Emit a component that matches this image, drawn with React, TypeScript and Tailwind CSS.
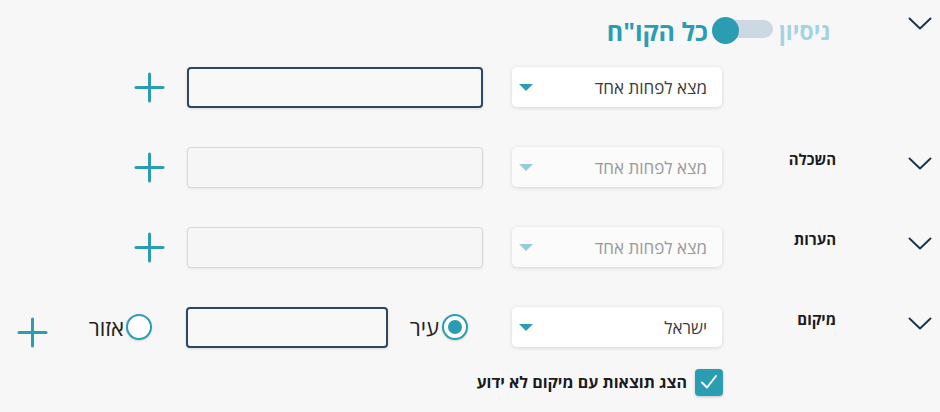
import React from "react";

const TEAL = "#2b9db3";

function Chevron() {
  return (
    <svg width="24" height="13" viewBox="0 0 24 13" className="block">
      <polyline points="1.5,1.5 12,11.5 22.5,1.5" fill="none" stroke="#1d3650" strokeWidth="2" strokeLinecap="round" strokeLinejoin="round" />
    </svg>
  );
}

function Plus({ color = TEAL }: { color?: string }) {
  return (
    <svg width="31" height="31" viewBox="0 0 31 31" className="block">
      <line x1="15.5" y1="2" x2="15.5" y2="29" stroke={color} strokeWidth="3" strokeLinecap="round" />
      <line x1="2" y1="15.5" x2="29" y2="15.5" stroke={color} strokeWidth="3" strokeLinecap="round" />
    </svg>
  );
}

function Select({ text, disabled = false, ml = "ml-[29px]" }: { text: string; disabled?: boolean; ml?: string }) {
  return (
    <div
      className={`${ml} w-[210px] h-[40px] rounded-[5px] flex items-center justify-between pl-[7px] pr-[15px] shadow-[0_1px_4px_rgba(0,0,0,0.14)] ${
        disabled ? "bg-[#fbfbfb]" : "bg-white"
      }`}
    >
      <svg width="14" height="7" viewBox="0 0 14 7" className="block">
        <polygon points="0,0 14,0 7,7" fill={disabled ? "#93cdd9" : TEAL} />
      </svg>
      <span dir="rtl" className={`text-[17px] leading-none ${disabled ? "text-[#9a9a9a]" : "text-[#3c3c3c]"}`}>
        {text}
      </span>
    </div>
  );
}

function TextInput({ width, disabled = false }: { width: string; disabled?: boolean }) {
  return (
    <div
      className={`${width} h-[41px] rounded-[4px] ${
        disabled
          ? "border border-[#d9d9d9] bg-[#f6f6f6] shadow-[0_1px_3px_rgba(0,0,0,0.08)]"
          : "border-2 border-[#2b4862] bg-[#f8f8f8] shadow-[0_1px_3px_rgba(0,0,0,0.12)]"
      }`}
    />
  );
}

function LabelAndChevron({ label }: { label?: string }) {
  return (
    <div className="flex items-start">
      <div className="w-[114px] flex justify-end mt-[2px]">
        {label && (
          <span dir="rtl" className="text-[15px] leading-[20px] font-bold text-[#1b1b1b]">
            {label}
          </span>
        )}
      </div>
      <div className="ml-[72px] mt-[10px]">
        <Chevron />
      </div>
    </div>
  );
}

function Radio({ checked }: { checked: boolean }) {
  return (
    <div className="w-[26px] h-[26px] rounded-full border-[2.5px] border-[#2b9db3] flex items-center justify-center bg-white shadow-[0_1px_2px_rgba(0,0,0,0.15)]">
      {checked && <div className="w-[14px] h-[14px] rounded-full bg-[#2b9db3]" />}
    </div>
  );
}

export default function App() {
  return (
    <div
      className="w-[940px] h-[412px] bg-[#f7f7f7] overflow-hidden"
      style={{ fontFamily: '"Open Sans", "DejaVu Sans", sans-serif' }}
    >
      {/* Row 1: toggle header */}
      <div className="h-[67px] flex items-start">
        <div className="ml-[560px] mt-[17px] flex items-center h-[28px]">
          <div className="w-[148px] flex justify-end">
            <span dir="rtl" className="text-[25px] leading-none font-bold text-[#2b9db3] whitespace-nowrap">
              כל הקו"ח
            </span>
          </div>
          <div className="relative ml-[4px] w-[61px] h-[28px]">
            <div className="absolute left-[6px] top-[3px] w-[55px] h-[18px] rounded-full bg-[#cdd9e2]" />
            <div className="absolute left-0 top-0 w-[27px] h-[27px] rounded-full bg-[#2b9db3]" />
          </div>
          <div className="ml-[6px] w-[56px] flex justify-start">
            <span dir="rtl" className="text-[23px] leading-none font-bold text-[#a6d3e2] whitespace-nowrap">
              ניסיון
            </span>
          </div>
        </div>
        <div className="ml-[73px] mt-[17px]">
          <Chevron />
        </div>
      </div>

      {/* Row 2 */}
      <div className="h-[80px] flex items-start">
        <div className="ml-[134px] mt-[5px]">
          <Plus />
        </div>
        <div className="ml-[22px]">
          <TextInput width="w-[296px]" />
        </div>
        <Select text="מצא לפחות אחד" />
      </div>

      {/* Row 3 */}
      <div className="h-[80px] flex items-start">
        <div className="ml-[134px] mt-[5px]">
          <Plus />
        </div>
        <div className="ml-[22px]">
          <TextInput width="w-[296px]" disabled />
        </div>
        <Select text="מצא לפחות אחד" disabled />
        <LabelAndChevron label="השכלה" />
      </div>

      {/* Row 4 */}
      <div className="h-[80px] flex items-start">
        <div className="ml-[134px] mt-[5px]">
          <Plus />
        </div>
        <div className="ml-[22px]">
          <TextInput width="w-[296px]" disabled />
        </div>
        <Select text="מצא לפחות אחד" disabled />
        <LabelAndChevron label="הערות" />
      </div>

      {/* Row 5 */}
      <div className="h-[61px] flex items-start">
        <div className="ml-[17px] mt-[10px]">
          <Plus />
        </div>
        <div className="ml-[35px] mt-[6px] w-[69px] flex items-center justify-end h-[28px]">
          <span dir="rtl" className="text-[22px] leading-none text-[#222] whitespace-nowrap">אזור</span>
          <div className="ml-[2px]">
            <Radio checked={false} />
          </div>
        </div>
        <div className="ml-[34px]">
          <TextInput width="w-[202px]" />
        </div>
        <div className="ml-[20px] mt-[6px] w-[60px] flex items-center justify-end h-[28px]">
          <span dir="rtl" className="text-[22px] leading-none text-[#222] whitespace-nowrap">עיר</span>
          <div className="ml-[3px]">
            <Radio checked />
          </div>
        </div>
        <Select text="ישראל" ml="ml-[44px]" />
        <LabelAndChevron label="מיקום" />
      </div>

      {/* Row 6 */}
      <div className="flex items-center h-[28px]">
        <div className="ml-[463px] w-[224px] flex justify-end">
          <span dir="rtl" className="text-[16px] leading-none font-bold text-[#1b1b1b] whitespace-nowrap">
            הצג תוצאות עם מיקום לא ידוע
          </span>
        </div>
        <div className="ml-[8px] w-[28px] h-[27px] rounded-[4px] bg-[#2b9db3] flex items-center justify-center shadow-[0_1px_3px_rgba(0,0,0,0.2)]">
          <svg width="18" height="16" viewBox="0 0 18 16">
            <polyline points="2,8.5 7,13.5 16,2" fill="none" stroke="white" strokeWidth="2" strokeLinecap="round" strokeLinejoin="round" />
          </svg>
        </div>
      </div>
    </div>
  );
}
